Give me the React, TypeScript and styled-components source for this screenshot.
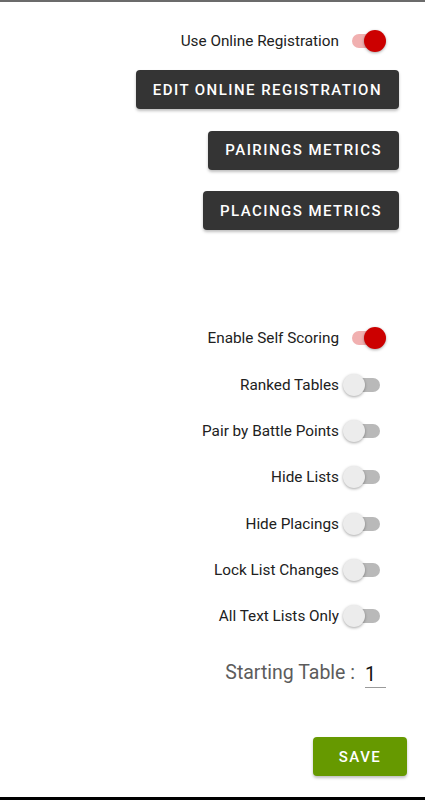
import React, { useState } from 'react';
import styled, { createGlobalStyle } from 'styled-components';

const GlobalStyle = createGlobalStyle`
  * { box-sizing: border-box; }
  body {
    margin: 0;
    background: #ffffff;
    font-family: Roboto, "Liberation Sans", sans-serif;
  }
`;

const Page = styled.div`
  display: flex;
  flex-direction: column;
  align-items: flex-end;
  height: 800px;
  padding: 16px 0 0 0;
  border-top: 2px solid #6b6b6b;
  border-bottom: 3px solid #000;
  background: #fff;
`;

const SwitchRow = styled.div`
  display: flex;
  align-items: center;
  justify-content: flex-end;
  height: 46.3px;
  margin-right: 35px;
  font-size: 15.3px;
  color: #212121;
`;

const Label = styled.span`
  margin-right: 1px;
`;

const SwitchBox = styled.button`
  position: relative;
  width: 50px;
  height: 28px;
  padding: 0;
  border: none;
  background: transparent;
  cursor: pointer;
`;

const Track = styled.span<{ $on: boolean }>`
  position: absolute;
  left: 12px;
  top: 7px;
  width: 28px;
  height: 14px;
  border-radius: 7px;
  background: ${(p) => (p.$on ? '#f1b0b0' : '#b9b9b9')};
`;

const Thumb = styled.span<{ $on: boolean }>`
  position: absolute;
  top: 3px;
  left: ${(p) => (p.$on ? '24px' : '3px')};
  width: 22px;
  height: 22px;
  border-radius: 50%;
  background: ${(p) => (p.$on ? '#cc0000' : '#ececec')};
  box-shadow: 0 1px 3px rgba(0, 0, 0, 0.35);
`;

const ActionButton = styled.button<{ $green?: boolean }>`
  height: 39px;
  min-width: 94px;
  padding: 0 17px;
  border: none;
  border-radius: 4px;
  background: ${(p) => (p.$green ? '#669900' : '#343434')};
  color: #fff;
  font-family: Roboto, "Liberation Sans", sans-serif;
  font-size: 15px;
  font-weight: 500;
  letter-spacing: 1.45px;
  text-transform: uppercase;
  box-shadow: 0 2px 3px rgba(0, 0, 0, 0.25);
  margin-right: ${(p) => (p.$green ? '18px' : '26px')};
`;

const ButtonStack = styled.div`
  display: flex;
  flex-direction: column;
  align-items: flex-end;
  gap: 21.5px;
  margin-top: 6px;
  align-self: stretch;
`;

const Spacer = styled.div<{ $h: number }>`
  height: ${(p) => p.$h}px;
  flex-shrink: 0;
`;

const TableRow = styled.div`
  display: flex;
  align-items: center;
  height: 40px;
  margin-right: 39px;
  font-size: 19.5px;
  color: #5c5c5c;
`;

const TableInput = styled.div`
  width: 21px;
  margin-left: 10px;
  padding-bottom: 1px;
  border-bottom: 1.5px solid #9a9a9a;
  color: #111;
  font-size: 19.5px;
  margin-top: 6px;
`;

type ToggleProps = { label: string; initial: boolean };

const Toggle: React.FC<ToggleProps> = ({ label, initial }) => {
  const [on, setOn] = useState(initial);
  return (
    <SwitchRow>
      <Label>{label}</Label>
      <SwitchBox onClick={() => setOn(!on)}>
        <Track $on={on} />
        <Thumb $on={on} />
      </SwitchBox>
    </SwitchRow>
  );
};

const options = [
  { label: 'Enable Self Scoring', on: true },
  { label: 'Ranked Tables', on: false },
  { label: 'Pair by Battle Points', on: false },
  { label: 'Hide Lists', on: false },
  { label: 'Hide Placings', on: false },
  { label: 'Lock List Changes', on: false },
  { label: 'All Text Lists Only', on: false },
];

const App: React.FC = () => {
  return (
    <>
      <GlobalStyle />
      <Page>
        <Toggle label="Use Online Registration" initial={true} />
        <ButtonStack>
          <ActionButton>Edit Online Registration</ActionButton>
          <ActionButton>Pairings Metrics</ActionButton>
          <ActionButton>Placings Metrics</ActionButton>
        </ButtonStack>
        <Spacer $h={85} />
        {options.map((o) => (
          <Toggle key={o.label} label={o.label} initial={o.on} />
        ))}
        <Spacer $h={13} />
        <TableRow>
          Starting Table :
          <TableInput>1</TableInput>
        </TableRow>
        <Spacer $h={45} />
        <ActionButton $green>Save</ActionButton>
      </Page>
    </>
  );
};

export default App;
